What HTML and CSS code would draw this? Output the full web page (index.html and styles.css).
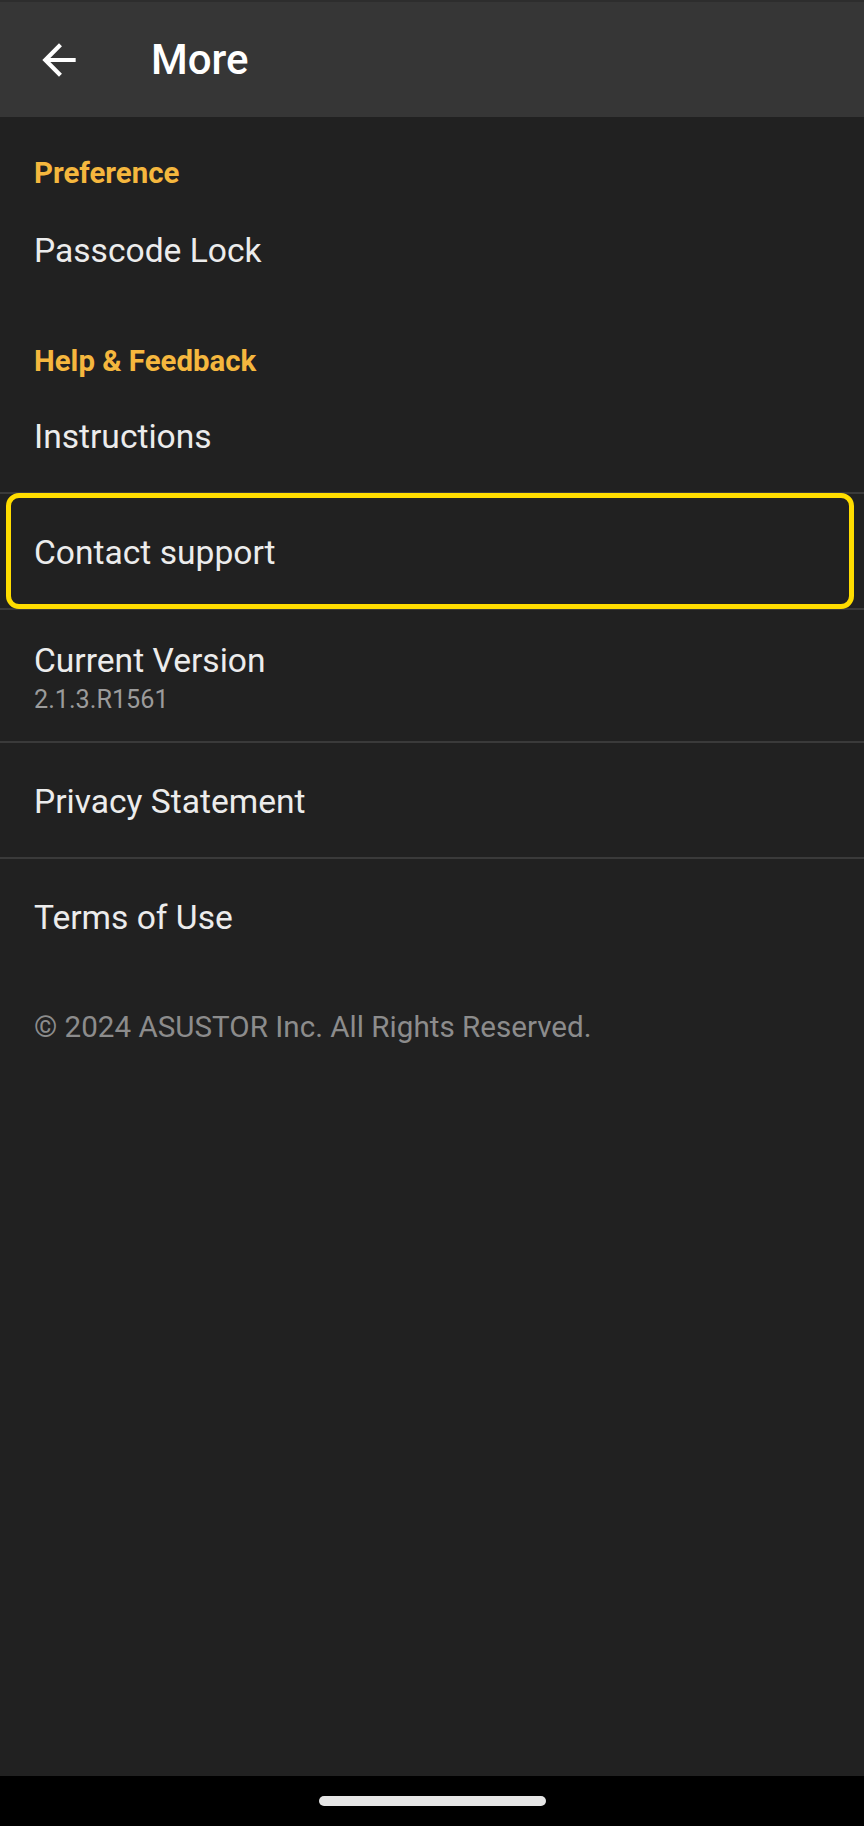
FILE: index.html
```html
<!DOCTYPE html>
<html lang="en">
<head>
  <meta charset="UTF-8">
  <meta name="viewport" content="width=device-width, initial-scale=1.0">
  <title>More</title>
  <link rel="stylesheet" href="styles.css">
</head>
<body>
  <div class="screen">
    <header class="toolbar">
      <svg class="back" viewBox="0 0 24 24" aria-hidden="true">
        <path d="M20 11H7.83l5.59-5.59L12 4l-8 8 8 8 1.41-1.41L7.83 13H20v-2z"/>
      </svg>
      <h1>More</h1>
    </header>

    <main class="list">
      <div class="category">Preference</div>
      <div class="item">Passcode Lock</div>

      <div class="category">Help &amp; Feedback</div>
      <div class="item divided">Instructions</div>
      <div class="item divided focused">Contact support</div>
      <div class="item divided version">
        <div>Current Version</div>
        <div class="summary">2.1.3.R1561</div>
      </div>
      <div class="item divided">Privacy Statement</div>
      <div class="item">Terms of Use</div>

      <p class="copyright">© 2024 ASUSTOR Inc. All Rights Reserved.</p>
    </main>

    <div class="navbar">
      <div class="pill"></div>
    </div>
  </div>
</body>
</html>
```

FILE: styles.css
```css
body {
  margin: 0;
  padding: 0;
  background: #212121;
  color: #ececec;
  font-family: Roboto, 'Noto Sans', sans-serif;
}
.screen {
  display: flex;
  flex-direction: column;
  min-height: 100vh;
}
.toolbar {
  display: flex;
  align-items: center;
  height: 115px;
  border-top: 2px solid #2d2d2d;
  background: #363636;
}
.back {
  width: 50px;
  height: 50px;
  margin-left: 34px;
  fill: #ffffff;
}
.toolbar h1 {
  margin: 0 0 0 67px;
  font-size: 42px;
  font-weight: 500;
  color: #ffffff;
}
.list {
  flex: 1;
}
.category {
  padding: 39px 34px 0;
  font-size: 29.4px;
  line-height: 34px;
  font-weight: 700;
  color: #f5b73e;
}
.item {
  position: relative;
  padding: 39px 34px 35px;
  font-size: 33.6px;
  line-height: 40px;
}
.category + .item {
  padding-top: 41px;
}
.category + .item.divided {
  padding-top: 39px;
}
.item + .category {
  padding-top: 38px;
}
.item.divided {
  border-bottom: 2px solid #3a3a3a;
}
.item.version {
  padding-top: 31px;
  padding-bottom: 27px;
}
.summary {
  margin-top: 5px;
  font-size: 25.2px;
  line-height: 28px;
  color: #9b9b9b;
}
/* focus ring drawn over the row */
.item.focused::after {
  content: '';
  position: absolute;
  top: -1px;
  bottom: -1px;
  left: 6px;
  right: 10px;
  border: 5px solid #ffdd00;
  border-radius: 13px;
}
.copyright {
  margin: 0;
  padding: 37px 34px 0;
  font-size: 29.6px;
  line-height: 34px;
  color: #8c8c8c;
}
.navbar {
  display: flex;
  align-items: center;
  justify-content: center;
  height: 50px;
  background: #000;
}
.pill {
  width: 227px;
  height: 10px;
  border-radius: 5px;
  background: #e6e6e6;
}
```
